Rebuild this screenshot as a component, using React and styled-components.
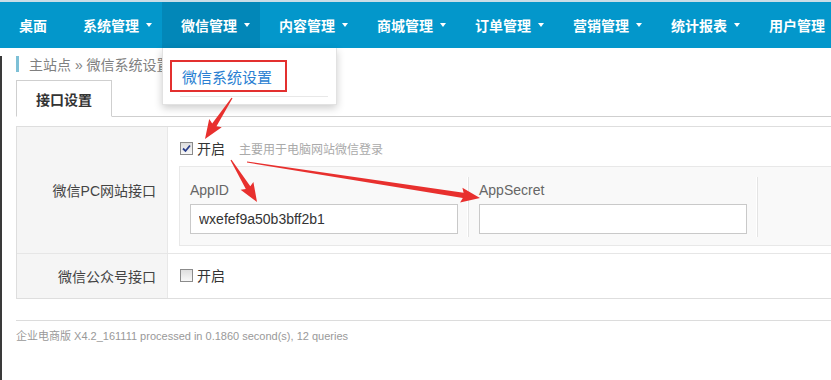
import React from "react";
import styled, { createGlobalStyle } from "styled-components";

const GlobalStyle = createGlobalStyle`
  html, body {
    margin: 0;
    padding: 0;
    overflow: hidden;
    background: #fff;
  }
  body {
    font-family: "Liberation Sans", "Noto Sans CJK SC", Arial, sans-serif;
    color: #333;
  }
`;

const Page = styled.div`
  position: relative;
  width: 831px;
  height: 380px;
  overflow: hidden;
`;

const NavBar = styled.nav`
  display: flex;
  height: 46px;
  background: #0397cb;
  border-top: 2px solid #c9dde7;
  white-space: nowrap;
`;

const NavItem = styled.div`
  position: relative;
  display: flex;
  align-items: center;
  flex-shrink: 0;
  padding: ${({ $plain }) => ($plain ? "0 17px 0 19px" : "0 10px 0 19px")};
  background: ${({ $active }) => ($active ? "#0287b8" : "transparent")};
  color: #fff;
  font-size: 14px;
  font-weight: bold;
`;

const Caret = styled.span`
  width: 0;
  height: 0;
  margin-left: 7px;
  border-left: 3.5px solid transparent;
  border-right: 3.5px solid transparent;
  border-top: 4px solid #fff;
`;

const Dropdown = styled.div`
  position: absolute;
  top: 100%;
  left: 0;
  z-index: 5;
  width: 175px;
  height: 57px;
  box-sizing: border-box;
  padding-top: 12px;
  padding-left: 7px;
  background: #fff;
  border: 1px solid #e2e2e2;
  border-top: none;
  box-shadow: 0 3px 8px rgba(0, 0, 0, 0.2);
  font-weight: normal;
`;

const DropLink = styled.div`
  width: 117px;
  height: 32px;
  box-sizing: border-box;
  display: flex;
  align-items: center;
  padding-left: 10px;
  border: 2px solid #e3302f;
  color: #2a7fd2;
  font-size: 15px;
`;

const DropDivider = styled.div`
  height: 1px;
  margin: 4px 8px 0 10px;
  background: #e8e8e8;
`;

const Main = styled.div`
  border-left: 2px solid #3a3a3a;
  padding-left: 14px;
  height: 332px;
`;

const Crumb = styled.div`
  display: flex;
  align-items: center;
  height: 16px;
  margin-top: 8px;
  font-size: 14px;
  color: #808080;
  &::before {
    content: "";
    width: 3px;
    height: 16px;
    margin-right: 10px;
    background: #7ec0d6;
  }
`;

const Tabs = styled.div`
  display: flex;
  margin-top: 8px;
  border-bottom: 1px solid #cfcfcf;
  width: 1000px;
`;

const Tab = styled.div`
  height: 35px;
  padding: 0 19px;
  display: flex;
  align-items: center;
  margin-bottom: -1px;
  background: #fff;
  border: 1px solid #cfcfcf;
  border-bottom: 1px solid #fff;
  font-size: 14px;
  font-weight: bold;
  color: #333;
`;

const FormTable = styled.div`
  margin-top: 9px;
  width: 1000px;
  border: 1px solid #dedede;
`;

const Row = styled.div`
  display: grid;
  grid-template-columns: 151px 1fr;
  & + & {
    border-top: 1px solid #e6e6e6;
  }
`;

const Label = styled.div`
  display: flex;
  align-items: center;
  justify-content: flex-end;
  box-sizing: border-box;
  padding-right: 11px;
  background: #f5f5f5;
  border-right: 1px solid #e8e8e8;
  font-size: 14px;
  color: #444;
`;

const Cell = styled.div`
  padding: ${({ $tall }) => ($tall ? "11px 11px 7px" : "11px 11px 13px")};
`;

const CheckLine = styled.label`
  display: flex;
  align-items: center;
  height: 20px;
  font-size: 14px;
  color: #333;
`;

const Box = styled.span`
  width: 13px;
  height: 13px;
  box-sizing: border-box;
  margin: 0 4px 0 1px;
  display: flex;
  align-items: center;
  justify-content: center;
  border: 1px solid #8b8b8b;
  background: linear-gradient(#dedede, #f8f8f8);
`;

const Hint = styled.span`
  margin-left: 14px;
  font-size: 12px;
  color: #aaa;
`;

const Fields = styled.div`
  display: flex;
  margin-top: 8px;
  background: #f9f9f9;
  border: 1px solid #e8e8e8;
`;

const Field = styled.div`
  position: relative;
  width: 289px;
  box-sizing: border-box;
  padding: 14px 11px 11px 10px;
  &::after {
    content: "";
    position: absolute;
    right: 0;
    top: 10px;
    bottom: 8px;
    width: 1px;
    background: #e4e4e4;
    box-shadow: -1px 0 0 #fff;
  }
`;

const FieldName = styled.div`
  height: 18px;
  line-height: 18px;
  margin-bottom: 5px;
  font-size: 14px;
  color: #666;
`;

const Input = styled.input`
  display: block;
  width: 268px;
  height: 30px;
  box-sizing: border-box;
  padding: 0 8px;
  margin: 0;
  border: 1px solid #c9c9c9;
  border-radius: 0;
  background: #fff;
  font-family: "Liberation Sans", Arial, sans-serif;
  font-size: 14px;
  color: #333;
  outline: none;
`;

const Footer = styled.div`
  margin-top: 21px;
  padding-top: 8px;
  border-top: 1px solid #dcdcdc;
  font-size: 11px;
  line-height: 14px;
  color: #999;
`;

const Overlay = styled.svg`
  position: absolute;
  left: 0;
  top: 0;
  z-index: 10;
  pointer-events: none;
`;

const navItems = [
  { name: "桌面", plain: true },
  { name: "系统管理" },
  { name: "微信管理", active: true },
  { name: "内容管理" },
  { name: "商城管理" },
  { name: "订单管理" },
  { name: "营销管理" },
  { name: "统计报表" },
  { name: "用户管理" },
];

// tapered red annotation arrow from tail to tip
function arrowPoints([tx, ty], [px, py]) {
  const len = Math.hypot(px - tx, py - ty);
  const dx = (px - tx) / len;
  const dy = (py - ty) / len;
  const nx = -dy;
  const ny = dx;
  const head = 17;
  const bx = px - dx * head;
  const by = py - dy * head;
  const pts = [
    [tx + nx * 0.6, ty + ny * 0.6],
    [bx + nx * 2.6, by + ny * 2.6],
    [bx - dx * 2 + nx * 7.5, by - dy * 2 + ny * 7.5],
    [px, py],
    [bx - dx * 2 - nx * 7.5, by - dy * 2 - ny * 7.5],
    [bx - nx * 2.6, by - ny * 2.6],
    [tx - nx * 0.6, ty - ny * 0.6],
  ];
  return pts.map(p => p.map(v => v.toFixed(1)).join(",")).join(" ");
}

const arrows = [
  [[232, 98], [205, 139]],
  [[231, 160], [257, 202]],
  [[247, 162], [480, 198]],
];

const Check = ({ checked }) => (
  <Box>
    {checked ? (
      <svg width="9" height="9" viewBox="0 0 9 9">
        <path d="M1 4.5 L3.5 7 L8 1.5" fill="none" stroke="#2b3f8c" strokeWidth="1.8" />
      </svg>
    ) : null}
  </Box>
);

const App = () => {
  return (
    <Page>
      <GlobalStyle />
      <NavBar>
        {navItems.map(item => (
          <NavItem key={item.name} $plain={item.plain} $active={item.active}>
            {item.name}
            {item.plain || item.name === "用户管理" ? null : <Caret />}
            {item.active ? (
              <Dropdown>
                <DropLink>微信系统设置</DropLink>
                <DropDivider />
              </Dropdown>
            ) : null}
          </NavItem>
        ))}
      </NavBar>
      <Main>
        <Crumb>主站点 » 微信系统设置</Crumb>
        <Tabs>
          <Tab>接口设置</Tab>
        </Tabs>
        <FormTable>
          <Row>
            <Label>微信PC网站接口</Label>
            <Cell $tall>
              <CheckLine>
                <Check checked />
                开启
                <Hint>主要用于电脑网站微信登录</Hint>
              </CheckLine>
              <Fields>
                <Field>
                  <FieldName>AppID</FieldName>
                  <Input defaultValue="wxefef9a50b3bff2b1" />
                </Field>
                <Field>
                  <FieldName>AppSecret</FieldName>
                  <Input defaultValue="" />
                </Field>
              </Fields>
            </Cell>
          </Row>
          <Row>
            <Label>微信公众号接口</Label>
            <Cell>
              <CheckLine>
                <Check />
                开启
              </CheckLine>
            </Cell>
          </Row>
        </FormTable>
        <Footer>企业电商版 X4.2_161111 processed in 0.1860 second(s), 12 queries</Footer>
      </Main>
      <Overlay width="831" height="380" viewBox="0 0 831 380">
        {arrows.map(([t, p], i) => (
          <polygon key={i} points={arrowPoints(t, p)} fill="#e8302e" />
        ))}
      </Overlay>
    </Page>
  );
};

export default App;
